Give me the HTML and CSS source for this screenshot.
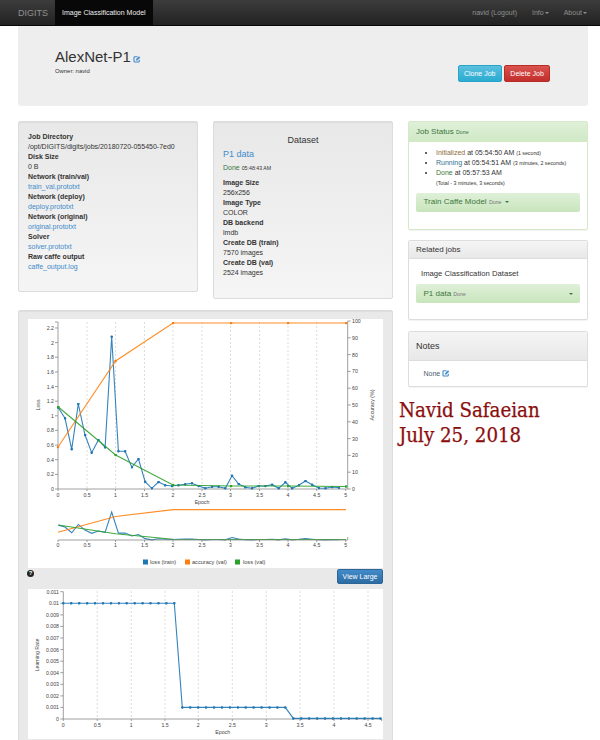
FILE: index.html
```html
<!DOCTYPE html>
<html>
	<head>
		<meta http-equiv="Content-Type" content="text/html; charset=UTF-8">
		<title>AlexNet-P1 - DIGITS</title>
		<link rel="stylesheet" href="styles.css">
	</head>
	<body>
		<svg class="defs" width="0" height="0">
			<defs>
				<symbol id="edit" viewBox="0 0 16 16">
					<path d="M12.5 9.5v3a1.5 1.5 0 0 1-1.5 1.5H3.5A1.5 1.5 0 0 1 2 12.500V5a1.500 1.500 0 0 1 1.500-1.500H9" fill="none" stroke="currentColor" stroke-width="2.200"/>
					<path d="M6 8.500l6-6 2.500 2.500-6 6H6z" fill="currentColor"/>
				</symbol>
				<marker id="dotb" markerUnits="userSpaceOnUse" markerWidth="3" markerHeight="3" refX="1.250" refY="1.250"><rect width="2.500" height="2.500" rx="1" fill="#1f77b4"/></marker>
				<marker id="doto" markerUnits="userSpaceOnUse" markerWidth="3" markerHeight="3" refX="1.250" refY="1.250"><rect width="2.500" height="2.500" rx="1" fill="#ff7f0e"/></marker>
				<marker id="dotg" markerUnits="userSpaceOnUse" markerWidth="3" markerHeight="3" refX="1.250" refY="1.250"><rect width="2.500" height="2.500" rx="1" fill="#2ca02c"/></marker>
				<polyline id="train" class="series" points="58.300,407.700 65,418.300 71.700,449.300 78.300,404 85,435 91.700,452.700 98.400,440 105.100,447.300 111.700,336.700 118.400,451.300 125.100,451.300 131.800,467.300 138.500,459 145.100,481.700 151.800,488.300 158.500,482 165.200,485.300 171.900,486 178.500,485.300 185.200,484.300 191.900,483.300 198.600,486 205.300,488.300 212,486.700 218.600,486.700 225.300,488.300 232,475.700 238.700,484 245.300,487.300 252,488.300 258.700,486 265.400,486 272.100,484.700 278.700,488.300 285.400,482.300 292.100,488.300 298.800,485.300 305.500,481 312.100,484.700 318.800,488 325.500,488.300 332.200,487 338.900,487.700"/>
				<polyline id="acc" class="series" points="58,447 115.600,361 173,323 231,323 288,323 346,323"/>
				<polyline id="val" class="series" points="58.300,407 115.600,455 173,485 231,486 288,486 346,486.500"/>
			</defs>
		</svg>

		<nav class="navbar">
			<a class="brand">DIGITS</a>
			<a class="nav-active">Image Classification Model</a>
			<div class="nav-right">
				<a>navid (Logout)</a>
				<a>Info<i class="caret"></i></a>
				<a>About<i class="caret"></i></a>
			</div>
		</nav>

		<div class="page">
			<header class="jumbotron">
				<div>
					<h2 class="job-title">AlexNet-P1<svg class="edit-icon"><use href="#edit"/></svg></h2>
					<div class="owner">Owner: navid</div>
				</div>
				<div class="job-buttons">
					<button type="button" class="btn btn-info">Clone Job</button>
					<button type="button" class="btn btn-danger">Delete Job</button>
				</div>
			</header>

			<div class="content">
				<div class="left-side">
					<div class="well-row">
						<section class="well">
							<dl>
								<dt>Job Directory</dt>
								<dd>/opt/DIGITS/digits/jobs/20180720-055450-7ed0</dd>
								<dt>Disk Size</dt>
								<dd>0 B</dd>
								<dt>Network (train/val)</dt>
								<dd><a>train_val.prototxt</a></dd>
								<dt>Network (deploy)</dt>
								<dd><a>deploy.prototxt</a></dd>
								<dt>Network (original)</dt>
								<dd><a>original.prototxt</a></dd>
								<dt>Solver</dt>
								<dd><a>solver.prototxt</a></dd>
								<dt>Raw caffe output</dt>
								<dd><a>caffe_output.log</a></dd>
							</dl>
						</section>
						<section class="well well-dataset">
							<h4 class="well-title">Dataset</h4>
							<h4 class="dataset-name"><a>P1 data</a></h4>
							<div class="dataset-status"><span class="done">Done</span> <small>05:48:43 AM</small></div>
							<dl>
								<dt>Image Size</dt>
								<dd>256x256</dd>
								<dt>Image Type</dt>
								<dd>COLOR</dd>
								<dt>DB backend</dt>
								<dd>lmdb</dd>
								<dt>Create DB (train)</dt>
								<dd>7570 images</dd>
								<dt>Create DB (val)</dt>
								<dd>2524 images</dd>
							</dl>
						</section>
					</div>

					<section class="well well-charts">
						<svg class="chart chart-main" viewBox="28 319 355 249">
							<g class="grid">
								<path d="M87 322V489M115.500 322V489M144.500 322V489M173 322V489M202 322V489M230.500 322V489M259.500 322V489M288 322V489M316.700 322V489"/>
							</g>
							<g class="axis">
								<path d="M55 322H58V489H55M55 474.400H58M55 459.700H58M55 445.100H58M55 430.400H58M55 415.800H58M55 401.200H58M55 386.500H58M55 371.900H58M55 357.200H58M55 342.600H58M55 328H58"/>
								<path d="M58 489H347.700M58 489V491M87 489V491M115.500 489V491M144.500 489V491M173 489V491M202 489V491M230.500 489V491M259.500 489V491M288 489V491M316.700 489V491M345.700 489V491"/>
								<path d="M350.700 321H347.700V489H350.700M347.700 472.200H350.700M347.700 455.400H350.700M347.700 438.600H350.700M347.700 421.800H350.700M347.700 405H350.700M347.700 388.200H350.700M347.700 371.400H350.700M347.700 354.600H350.700M347.700 337.800H350.700"/>
							</g>
							<g class="ticks tick-end">
								<text x="54" y="491">0</text><text x="54" y="476.400">0.2</text><text x="54" y="461.700">0.4</text><text x="54" y="447.100">0.6</text><text x="54" y="432.400">0.8</text><text x="54" y="417.800">1</text><text x="54" y="403.200">1.2</text><text x="54" y="388.500">1.4</text><text x="54" y="373.900">1.6</text><text x="54" y="359.200">1.8</text><text x="54" y="344.600">2</text><text x="54" y="330">2.2</text>
							</g>
							<g class="ticks">
								<text x="352" y="491">0</text><text x="352" y="474.200">10</text><text x="352" y="457.400">20</text><text x="352" y="440.600">30</text><text x="352" y="423.800">40</text><text x="352" y="407">50</text><text x="352" y="390.200">60</text><text x="352" y="373.400">70</text><text x="352" y="356.600">80</text><text x="352" y="339.800">90</text><text x="352" y="323">100</text>
							</g>
							<g class="ticks tick-mid">
								<text x="58" y="497">0</text><text x="87" y="497">0.5</text><text x="115.500" y="497">1</text><text x="144.500" y="497">1.5</text><text x="173" y="497">2</text><text x="202" y="497">2.5</text><text x="230.500" y="497">3</text><text x="259.500" y="497">3.5</text><text x="288" y="497">4</text><text x="316.700" y="497">4.5</text><text x="345.700" y="497">5</text>
								<text x="202" y="503.500">Epoch</text>
								<text transform="translate(40 405) rotate(-90)">Loss</text>
								<text transform="translate(374 405) rotate(-90)">Accuracy (%)</text>
							</g>
							<use href="#train" class="line-train" marker-start="url(#dotb)" marker-mid="url(#dotb)" marker-end="url(#dotb)"/>
							<use href="#acc" class="line-acc" marker-start="url(#doto)" marker-mid="url(#doto)" marker-end="url(#doto)"/>
							<use href="#val" class="line-val" marker-start="url(#dotg)" marker-mid="url(#dotg)" marker-end="url(#dotg)"/>

							<!-- overview chart under the main one -->
							<g transform="translate(0 450.500) scale(1 .183)">
								<use href="#train" class="line-train"/>
								<use href="#acc" class="line-acc"/>
								<use href="#val" class="line-val"/>
							</g>
							<g class="axis">
								<path d="M58 540H347.700V537M58 540V542M87 540V542M115.500 540V542M144.500 540V542M173 540V542M202 540V542M230.500 540V542M259.500 540V542M288 540V542M316.700 540V542M345.700 540V542"/>
							</g>
							<g class="ticks tick-mid">
								<text x="58" y="546.500">0</text><text x="87" y="546.500">0.5</text><text x="115.500" y="546.500">1</text><text x="144.500" y="546.500">1.5</text><text x="173" y="546.500">2</text><text x="202" y="546.500">2.5</text><text x="230.500" y="546.500">3</text><text x="259.500" y="546.500">3.5</text><text x="288" y="546.500">4</text><text x="316.700" y="546.500">4.5</text><text x="345.700" y="546.500">5</text>
							</g>
							<g class="legend">
								<rect x="143" y="559.500" width="5" height="5" fill="#1f77b4"/><text x="150" y="564">loss (train)</text>
								<rect x="185" y="559.500" width="5" height="5" fill="#ff7f0e"/><text x="192" y="564">accuracy (val)</text>
								<rect x="235" y="559.500" width="5" height="5" fill="#2ca02c"/><text x="243" y="564">loss (val)</text>
							</g>
						</svg>

						<div class="chart-actions">
							<span class="help">?</span>
							<button type="button" class="btn btn-primary">View Large</button>
						</div>

						<svg class="chart chart-lr" viewBox="28 589 355 150">
							<g class="grid">
								<path d="M97.300 591V719M131.300 591V719M165 591V719M198.300 591V719M232.300 591V719M266.300 591V719M300 591V719M334 591V719M368 591V719"/>
							</g>
							<g class="axis">
								<path d="M60.300 591.700H63.300V719H60.300M60.300 707.400H63.300M60.300 695.900H63.300M60.300 684.300H63.300M60.300 672.700H63.300M60.300 661.200H63.300M60.300 649.600H63.300M60.300 638H63.300M60.300 626.400H63.300M60.300 614.900H63.300M60.300 603.300H63.300"/>
								<path d="M63.300 719H381.700V721M63.300 719V721M97.300 719V721M131.300 719V721M165 719V721M198.300 719V721M232.300 719V721M266.300 719V721M300 719V721M334 719V721M368 719V721"/>
							</g>
							<g class="ticks tick-end">
								<text x="59" y="721">0</text><text x="59" y="709.400">0.001</text><text x="59" y="697.900">0.002</text><text x="59" y="686.300">0.003</text><text x="59" y="674.700">0.004</text><text x="59" y="663.200">0.005</text><text x="59" y="651.600">0.006</text><text x="59" y="640">0.007</text><text x="59" y="628.400">0.008</text><text x="59" y="616.900">0.009</text><text x="59" y="605.300">0.01</text><text x="59" y="593.700">0.011</text>
							</g>
							<g class="ticks tick-mid">
								<text x="63.300" y="727">0</text><text x="97.300" y="727">0.5</text><text x="131.300" y="727">1</text><text x="165" y="727">1.5</text><text x="198.300" y="727">2</text><text x="232.300" y="727">2.5</text><text x="266.300" y="727">3</text><text x="300" y="727">3.5</text><text x="334" y="727">4</text><text x="368" y="727">4.5</text>
								<text x="222.700" y="734">Epoch</text>
								<text transform="translate(39 655) rotate(-90)">Learning Rate</text>
							</g>
							<polyline class="line-train" marker-start="url(#dotb)" marker-mid="url(#dotb)" marker-end="url(#dotb)" points="63.300,603.300 71.200,603.300 79.200,603.300 87.100,603.300 95,603.300 103,603.300 110.900,603.300 118.800,603.300 126.700,603.300 134.700,603.300 142.600,603.300 150.500,603.300 158.500,603.300 166.400,603.300 174.300,603.300 182.300,707.400 190.200,707.400 198.100,707.400 206,707.400 214,707.400 221.900,707.400 229.800,707.400 237.800,707.400 245.700,707.400 253.600,707.400 261.600,707.400 269.500,707.400 277.400,707.400 285.300,707.400 293.300,718.400 301.200,718.400 309.100,718.400 317.100,718.400 325,718.400 332.900,718.400 340.900,718.400 348.800,718.400 356.700,718.400 364.600,718.400 372.600,718.400 380.500,718.400"/>
						</svg>
					</section>
				</div>

				<aside class="right-side">
					<section class="panel panel-success">
						<div class="panel-heading">Job Status <small>Done</small></div>
						<div class="panel-body">
							<ul class="status-list">
								<li><span class="st-init">Initialized</span> at 05:54:50 AM <small>(1 second)</small></li>
								<li><span class="st-run">Running</span> at 05:54:51 AM <small>(3 minutes, 2 seconds)</small></li>
								<li><span class="done">Done</span> at 05:57:53 AM<br><small>(Total - 3 minutes, 3 seconds)</small></li>
							</ul>
							<div class="job-box">Train Caffe Model <small>Done</small> <i class="caret"></i></div>
						</div>
					</section>

					<section class="panel panel-related">
						<div class="panel-heading">Related jobs</div>
						<div class="panel-body related-body">
							<div class="related-type">Image Classification Dataset</div>
							<div class="job-box job-box-split"><span>P1 data <small>Done</small></span><i class="caret"></i></div>
						</div>
					</section>

					<section class="panel panel-notes">
						<div class="panel-heading">Notes</div>
						<div class="panel-body notes-body">None <svg class="edit-icon"><use href="#edit"/></svg></div>
					</section>

					<div class="handwritten">Navid Safaeian<br>July 25, 2018</div>
				</aside>
			</div>
		</div>
	</body>
</html>
```
FILE: styles.css
```css
html {
	overflow: hidden;
}
body {
	margin: 0;
	background-color: #fff;
	color: #333;
	font-family: "Liberation Sans", Arial, sans-serif;
	font-size: 7px;
	line-height: 10px;
}
a {
	color: #428bca;
}
small {
	font-size: 5.25px;
}
.defs {
	display: block;
	height: 0;
}

/* top bar */
.navbar {
	display: flex;
	align-items: center;
	height: 25px;
	padding: 0 13px 0 18px;
	background: linear-gradient(to bottom, #3c3c3c, #222);
	border-bottom: 1px solid #080808;
	color: #8f8f8f;
}
.navbar a {
	color: inherit;
}
.brand {
	width: 37px;
	font-size: 9px;
}
.navbar .nav-active {
	display: flex;
	align-items: center;
	height: 25px;
	padding: 0 7px;
	background-color: #080808;
	color: #eee;
	font-size: 7px;
	white-space: nowrap;
}
.nav-right {
	display: flex;
	gap: 15px;
	margin-left: auto;
}
.caret {
	display: inline-block;
	margin-left: 1px;
	vertical-align: middle;
	border-top: 2px solid currentColor;
	border-left: 2px solid transparent;
	border-right: 2px solid transparent;
}

.page {
	padding: 0 12px 0 18px;
}
.jumbotron {
	display: flex;
	justify-content: space-between;
	height: 80px;
	padding: 22px 38px 0 37px;
	box-sizing: border-box;
	background-color: #eee;
	border-radius: 0 0 3px 3px;
}
.job-title {
	margin: 0;
	font-size: 15px;
	font-weight: normal;
	line-height: 18px;
}
.edit-icon {
	display: inline-block;
	width: 8px;
	height: 8px;
	color: #428bca;
	vertical-align: -1px;
}
.job-title .edit-icon {
	margin-left: 2px;
}
.owner {
	margin-top: 1px;
	font-size: 5.9px;
	line-height: 8px;
}
.job-buttons {
	display: flex;
	gap: 2.500px;
	margin-top: 17px;
	align-items: flex-start;
}
.btn {
	height: 17px;
	padding: 0 5.200px;
	border: 1px solid;
	border-radius: 2px;
	color: #fff;
	font-family: inherit;
	font-size: 7px;
	cursor: pointer;
}
.btn-info {
	background: linear-gradient(to bottom, #5bc0de, #2aabd2);
	border-color: #28a4c9;
}
.btn-danger {
	background: linear-gradient(to bottom, #d9534f, #c12e2a);
	border-color: #b92c28;
}
.btn-primary {
	height: 15px;
	padding: 0 4.500px;
	background: linear-gradient(to bottom, #428bca, #2d6ca2);
	border-color: #2b669a;
}

.content {
	display: grid;
	grid-template-columns: 375px 180px;
	gap: 15px;
	margin-top: 15px;
}
.well-row {
	display: grid;
	grid-template-columns: 180px 180px;
	gap: 15px;
	align-items: start;
}
.well {
	padding: 10px 9px;
	box-sizing: border-box;
	background: linear-gradient(to bottom, #e8e8e8, #f5f5f5);
	border: 1px solid #dcdcdc;
	border-radius: 2px;
	box-shadow: inset 0 1px 1px rgba(0, 0, 0, .05);
}
.well-dataset {
	padding-bottom: 11px;
}
dl {
	margin: 0 0 9px;
}
dt {
	font-weight: bold;
}
dd {
	margin: 0;
	white-space: nowrap;
}
.well-title {
	margin: 3px 0 4px;
	font-size: 9px;
	font-weight: normal;
	line-height: 10px;
	text-align: center;
}
.dataset-name {
	margin: 0 0 4px;
	font-size: 9px;
	font-weight: normal;
	line-height: 10px;
}
.dataset-status {
	margin-bottom: 5px;
}
.done {
	color: #3c763d;
}
.st-init {
	color: #8a6d3b;
}
.st-run {
	color: #31708f;
}

/* charts */
.well-charts {
	margin-top: 11px;
	padding: 8px 9px 10px;
	background: #e9e9e9;
}
.chart {
	display: block;
	width: 355px;
	background-color: #fff;
}
.chart-main {
	height: 249px;
}
.chart-lr {
	height: 150px;
}
.chart-actions {
	display: flex;
	justify-content: space-between;
	align-items: flex-start;
	height: 21px;
	padding-top: 1px;
	box-sizing: border-box;
}
.help {
	width: 7px;
	height: 7px;
	margin: 1px 0 0 -1px;
	background-color: #222;
	border-radius: 50%;
	color: #fff;
	font-size: 6px;
	font-weight: bold;
	line-height: 7px;
	text-align: center;
}
.grid path {
	fill: none;
	stroke: #ddd;
	stroke-width: 1;
	stroke-dasharray: 2 2;
}
.axis path {
	fill: none;
	stroke: #888;
	stroke-width: .8;
}
.ticks text {
	fill: #444;
	font-size: 5.2px;
}
.tick-end text {
	text-anchor: end;
}
.tick-mid text {
	text-anchor: middle;
}
.legend text {
	fill: #444;
	font-size: 5.6px;
}
.series {
	vector-effect: non-scaling-stroke;
}
.line-train, .line-acc, .line-val {
	fill: none;
	stroke-width: 1.100;
	stroke-opacity: .9;
}
.line-train {
	stroke: #1f77b4;
}
.line-acc {
	stroke: #ff7f0e;
}
.line-val {
	stroke: #2ca02c;
}

/* right column */
.panel {
	margin-bottom: 10px;
	background-color: #fff;
	border: 1px solid #ddd;
	border-radius: 2px;
	box-shadow: 0 1px 1px rgba(0, 0, 0, .05);
}
.panel-heading {
	padding: 0 7px;
	height: 17px;
	background: linear-gradient(to bottom, #f5f5f5, #e8e8e8);
	border-bottom: 1px solid #ddd;
	font-size: 8px;
	line-height: 17px;
}
.panel-success {
	border-color: #d6e9c6;
}
.panel-success .panel-heading {
	height: 19px;
	background: linear-gradient(to bottom, #dff0d8, #d0e9c6);
	border-bottom-color: #d6e9c6;
	color: #3c763d;
	line-height: 19px;
}
.panel-body {
	padding: 6px 7px 17px;
}
.status-list {
	margin: 0 0 5px;
	padding-left: 20px;
}
.job-box {
	height: 19px;
	padding: 0 7.500px;
	background: linear-gradient(to bottom, #dff0d8, #c8e5bc);
	border-radius: 2px;
	color: #3c763d;
	font-size: 8px;
	line-height: 18px;
}
.job-box small {
	color: #777;
}
.job-box-split {
	display: flex;
	justify-content: space-between;
	align-items: center;
}
.related-body {
	padding: 10px 7px 16px;
}
.related-type {
	margin: 0 0 5px 5px;
	font-size: 7.700px;
	line-height: 10px;
}
.panel-related {
	margin-bottom: 11px;
}
.panel-notes .panel-heading {
	height: 28px;
	font-size: 9px;
	line-height: 28px;
}
.notes-body {
	padding: 8px 14.500px 7px;
	color: #4a5a6a;
	line-height: 10px;
}
.panel-notes {
	margin-bottom: 11px;
}
.handwritten {
	margin-left: -9px;
	color: #8b0e0e;
	font-family: "DejaVu Serif Condensed", "DejaVu Serif", "Liberation Serif", serif;
	font-stretch: condensed;
	font-size: 20.300px;
	line-height: 25px;
	white-space: nowrap;
	-webkit-text-stroke: .25px #8b0e0e;
}
```
